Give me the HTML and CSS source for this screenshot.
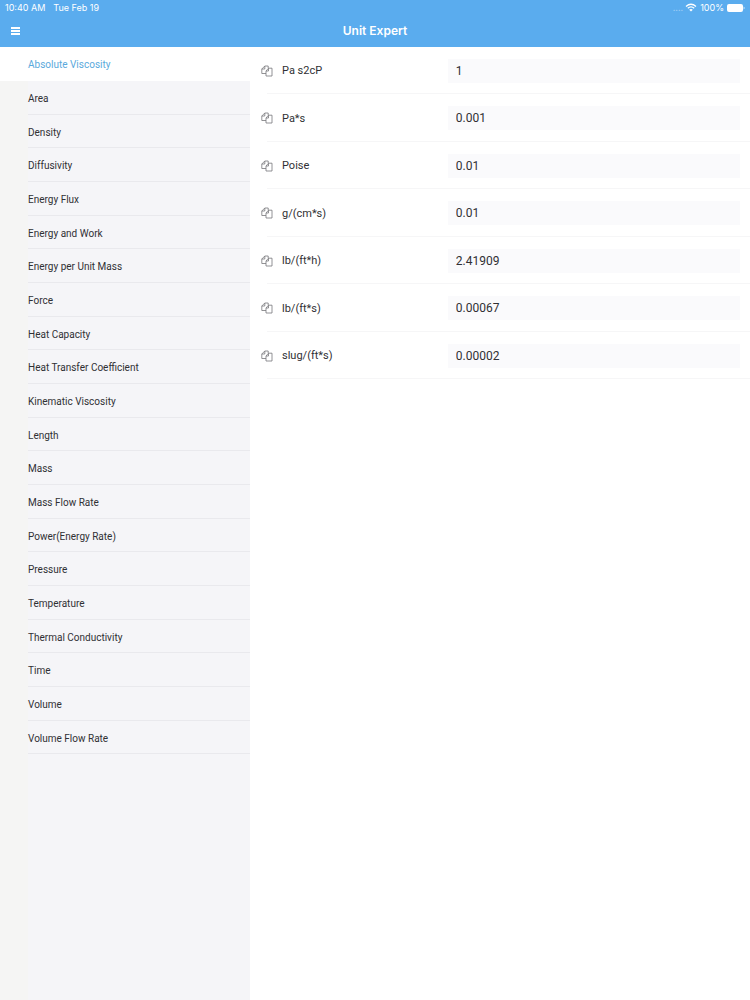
FILE: index.html
```html
<!DOCTYPE html>
<html lang="en">
<head>
  <meta charset="UTF-8">
  <meta name="viewport" content="width=device-width, initial-scale=1">
  <title>Unit Expert</title>
  <link rel="stylesheet" href="styles.css">
</head>
<body>
  <svg class="sprite" aria-hidden="true">
    <symbol id="copy" viewBox="0 0 12 12">
      <path d="M5 8.500H0.800V4l3-3H7.200V3M0.800 4h3V1M5 11V6L7.500 3.200H11V11zM5 6H7.500V3.200"/>
    </symbol>
  </svg>

  <header>
    <div class="status">
      <span>10:40 AM</span>
      <span class="date">Tue Feb 19</span>
      <span class="signal">....</span>
      <svg class="wifi" viewBox="0 0 12 9" aria-hidden="true">
        <path d="M1 3.500Q6-1 11 3.500M2.800 5.300Q6 2.500 9.200 5.300"/>
        <path class="dot" d="M4.200 6.700Q6 5.200 7.800 6.700L6 8.600z"/>
      </svg>
      <span>100%</span>
      <svg class="battery" viewBox="0 0 18 8" aria-hidden="true">
        <rect width="16" height="8" rx="2"/>
        <path d="M16.700 2.500q1.600 1.500 0 3z"/>
      </svg>
    </div>
    <div class="navbar">
      <button type="button" class="menu" aria-label="Menu"><i></i><i></i><i></i></button>
      <h1>Unit Expert</h1>
    </div>
  </header>

  <div class="split">
    <nav id="categories"></nav>
    <main id="units"></main>
  </div>

  <script>
    const categories = [
      'Absolute Viscosity', 'Area', 'Density', 'Diffusivity', 'Energy Flux',
      'Energy and Work', 'Energy per Unit Mass', 'Force', 'Heat Capacity',
      'Heat Transfer Coefficient', 'Kinematic Viscosity', 'Length', 'Mass',
      'Mass Flow Rate', 'Power(Energy Rate)', 'Pressure', 'Temperature',
      'Thermal Conductivity', 'Time', 'Volume', 'Volume Flow Rate'
    ];
    const units = [
      ['Pa s2cP', '1'],
      ['Pa*s', '0.001'],
      ['Poise', '0.01'],
      ['g/(cm*s)', '0.01'],
      ['lb/(ft*h)', '2.41909'],
      ['lb/(ft*s)', '0.00067'],
      ['slug/(ft*s)', '0.00002']
    ];

    document.getElementById('categories').innerHTML = categories.map((name, i) =>
      `<a href="#" class="category${i === 0 ? ' active' : ''}"><span>${name}</span></a>`
    ).join('');

    document.getElementById('units').innerHTML = units.map(([name, value], i) =>
      `<div class="unit">
        <button type="button" class="copy" aria-label="Copy ${name}"><svg><use href="#copy"/></svg></button>
        <label for="unit${i}">${name}</label>
        <input type="text" id="unit${i}" value="${value}">
      </div>`
    ).join('');
  </script>
</body>
</html>
```
FILE: styles.css
```css
* {
  box-sizing: border-box;
}

body {
  margin: 0;
  min-height: 100vh;
  display: flex;
  flex-direction: column;
  font-family: Roboto, sans-serif;
  color: #303034;
  background: #fff;
}

button {
  padding: 0;
  border: 0;
  background: none;
}

.sprite {
  display: none;
}

header {
  background: #5aacee;
  color: #fff;
}

.status {
  display: flex;
  align-items: center;
  height: 15px;
  padding: 0 5px;
  font-family: Inter, sans-serif;
  font-size: 9px;
}

.date {
  margin-left: 8px;
}

.signal {
  margin-left: auto;
  opacity: 0.4;
}

.wifi {
  width: 12px;
  height: 9px;
  margin: 0 3px 0 2px;
  fill: none;
  stroke: #fff;
  stroke-width: 1.3;
}

.wifi .dot {
  fill: #fff;
  stroke: none;
}

.battery {
  width: 18px;
  height: 8px;
  margin-left: 3px;
  fill: #fff;
}

.navbar {
  display: grid;
  grid-template-columns: 40px 1fr 40px;
  align-items: center;
  height: 32px;
  padding-bottom: 1px;
}

.menu {
  display: grid;
  gap: 1px;
  width: 9px;
  margin-left: 11px;
}

.menu i {
  height: 2px;
  background: #fff;
}

h1 {
  margin: 0;
  font-family: Inter, sans-serif;
  font-size: 12px;
  font-weight: 600;
  text-align: center;
}

.split {
  flex: 1;
  display: flex;
}

nav {
  width: 250px;
  background: linear-gradient(to right, #f5f5f4 28px, #f5f5f8 28px);
}

.category {
  display: flex;
  height: 34px;
  padding-left: 28px;
  font-size: 10px;
  color: inherit;
  text-decoration: none;
}

.category:nth-child(3n) {
  height: 33px;
}

.category span {
  flex: 1;
  display: flex;
  align-items: center;
  padding-top: 2px;
  border-bottom: 1px solid #e9e9ed;
}

.category.active {
  background: #fff;
  color: #5aa9dc;
}

.category.active span {
  border-color: transparent;
}

main {
  flex: 1;
}

.unit {
  display: flex;
  align-items: center;
  height: 47px;
  padding: 0 10px 0 11px;
  background: linear-gradient(#f6f6f7, #f6f6f7) 17px 100% / 100% 1px no-repeat;
}

.unit:nth-child(even) {
  height: 48px;
}

.copy,
.copy svg {
  display: block;
  width: 12px;
  height: 12px;
}

.copy svg {
  fill: none;
  stroke: #77777b;
  stroke-width: 0.8;
}

.unit label {
  flex: 3;
  padding-left: 9px;
  font-size: 11px;
}

.unit input {
  flex: 5;
  min-width: 0;
  height: 24px;
  padding: 0 8px;
  border: 0;
  background: #fafafc;
  color: inherit;
  font: 12px Roboto, sans-serif;
}
```
